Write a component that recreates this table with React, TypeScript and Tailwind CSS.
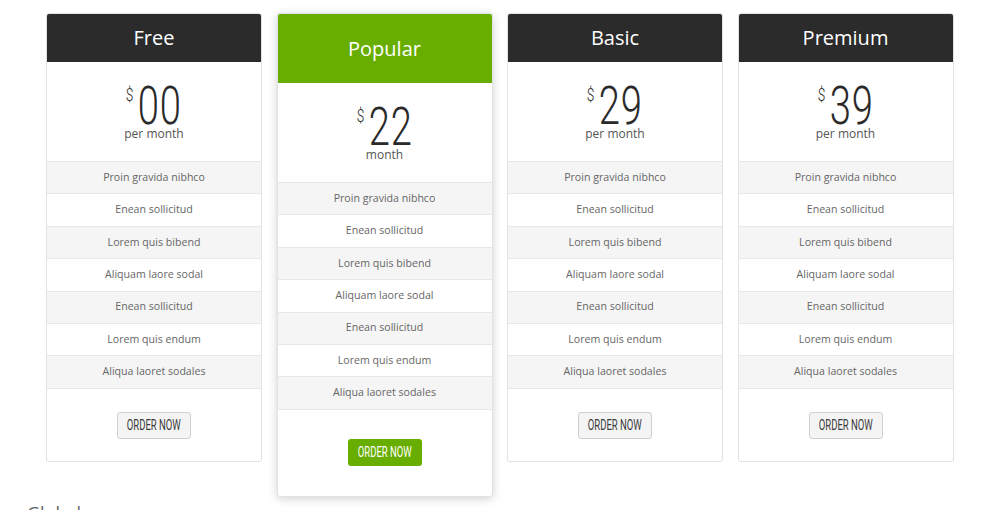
import React from "react";

const features = [
  "Proin gravida nibhco",
  "Enean sollicitud",
  "Lorem quis bibend",
  "Aliquam laore sodal",
  "Enean sollicitud",
  "Lorem quis endum",
  "Aliqua laoret sodales",
];

type Plan = {
  name: string;
  price: string;
  period: string;
  popular?: boolean;
};

const plans: Plan[] = [
  { name: "Free", price: "00", period: "per month" },
  { name: "Popular", price: "22", period: "month", popular: true },
  { name: "Basic", price: "29", period: "per month" },
  { name: "Premium", price: "39", period: "per month" },
];

const sans = "font-['Open_Sans',sans-serif]";

const PriceCard: React.FC<{ plan: Plan }> = ({ plan }) => {
  const pop = plan.popular;
  return (
    <div
      className={
        "w-[216px] flex flex-col bg-white border border-[#e2e2e2] rounded-[3px] overflow-hidden " +
        (pop ? "shadow-[0_2px_10px_rgba(0,0,0,0.18)]" : "")
      }
    >
      {/* header */}
      <div
        className={
          "flex items-center justify-center text-white text-[20px] " +
          sans +
          (pop ? " h-[69px] bg-[#68ae00]" : " h-[48px] bg-[#2b2b2b]")
        }
      >
        {plan.name}
      </div>

      {/* price */}
      <div className="h-[100px] flex flex-col items-center pt-[24px] border-b border-[#e6e6e6]">
        <div className="flex items-start scale-x-[0.72] font-['Roboto',sans-serif] font-light text-[#2a2a2a] h-[40px]">
          <span className="text-[19px] leading-none -mt-[1px] mr-[6px]">$</span>
          <span className="text-[53px] leading-[40px] tracking-[1px]">{plan.price}</span>
        </div>
        <div className={"text-[12px] text-[#555] leading-none mt-[2px] " + sans}>{plan.period}</div>
      </div>

      {/* features */}
      <div className="flex flex-col">
        {features.map((f, i) => (
          <div
            key={i}
            className={
              "h-[32.4px] flex items-center justify-center text-[10.6px] text-[#666] border-b border-[#e8e8e8] " +
              sans +
              (i % 2 === 0 ? " bg-[#f5f5f5]" : " bg-white")
            }
          >
            {f}
          </div>
        ))}
      </div>

      {/* footer */}
      <div
        className={
          "flex justify-center " + (pop ? "pt-[29px] pb-[30px]" : "pt-[23px] pb-[22px]")
        }
      >
        <button
          className={
            "w-[74px] h-[27px] rounded-[3px] flex items-center justify-center " +
            (pop
              ? "bg-[#68ae00] text-white"
              : "bg-[#f4f4f4] text-[#3a3a3a] border border-[#cfcfcf]")
          }
        >
          <span className="font-['Roboto',sans-serif] text-[14px] scale-x-[0.68] whitespace-nowrap">
            ORDER NOW
          </span>
        </button>
      </div>
    </div>
  );
};

export default function App() {
  return (
    <div className="w-[1000px] h-[510px] bg-white overflow-hidden">
      <div className="flex items-start gap-[14.5px] pl-[46px] pt-[13px]">
        {plans.map((p) => (
          <PriceCard key={p.name} plan={p} />
        ))}
      </div>
      <div className={"pl-[27px] mt-[4px] text-[18px] leading-[24px] text-[#666] " + sans}>Global</div>
    </div>
  );
}
